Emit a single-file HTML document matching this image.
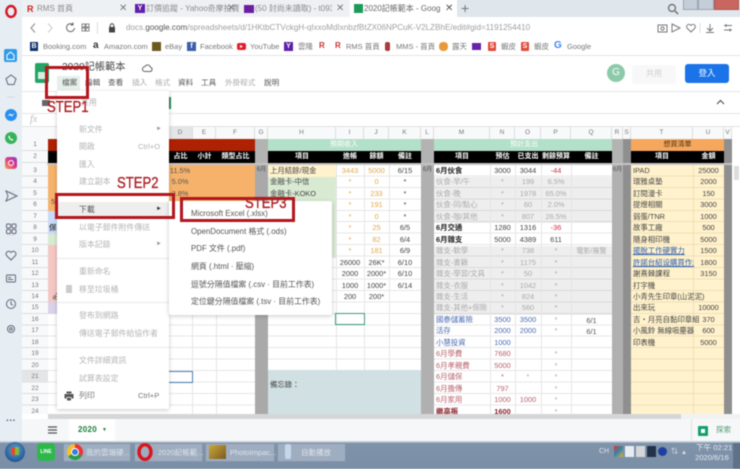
<!DOCTYPE html>
<html><head><meta charset="utf-8"><style>
html,body{margin:0;padding:0;background:#fff}
body{width:740px;height:463px;overflow:hidden;position:relative;font-family:"Liberation Sans","Noto Sans CJK TC",sans-serif}
#w{position:absolute;left:0;top:0;width:740px;height:463px;filter:blur(.45px)}
#w div,#w span.a,#w svg{position:absolute}
.t{white-space:nowrap}
.c{top:165px;font-size:7.4px;line-height:11.45px;text-align:center;color:#444;white-space:nowrap}
.h{font-size:7px;line-height:12px;top:151px;color:#fff;font-weight:bold;text-align:center;white-space:nowrap}
.ch{top:127px;height:12px;line-height:12px;font-size:6.5px;color:#777;text-align:center;border-right:1px solid #ddd;box-sizing:border-box;background:#f8f9fa}
.m{left:79px;font-size:7.9px;color:#b4b4b4;line-height:12px;white-space:nowrap}
.s{left:191px;font-size:7.9px;color:#555;line-height:12px;white-space:nowrap}
.sp{left:57px;width:112px;height:1px;background:#e8e8e8}
.mb{top:77px;font-size:7.6px;line-height:12px;color:#555;white-space:nowrap}
.bk{top:41px;font-size:7.5px;line-height:12px;color:#777;white-space:nowrap}
.ic{top:42px;width:9px;height:9px;color:#fff;font-size:7px;line-height:9px;text-align:center;font-weight:bold}
.tab{top:3px;font-size:8px;line-height:12px;color:#8a8a8a;white-space:nowrap}
.x{top:3px;font-size:10px;line-height:12px;color:#777}
.box{border:3.5px solid #b3161c;box-sizing:border-box}
.st{font-size:16px;line-height:16px;color:#ad1f24;-webkit-text-stroke:.35px #ad1f24;white-space:nowrap;transform:scaleX(.82);transform-origin:left top}
.o{color:#e0a84a}.b{color:#4a6ab0}.r{color:#b9606a}.g{color:#aaa}.k{color:#222;font-weight:bold}
.tb{top:443px;height:19px;background:#9fadc0;border:1px solid #8393a8;box-sizing:border-box;font-size:7.5px;line-height:17px;color:#dfe5ec;white-space:nowrap;padding-left:22px}
</style></head><body><div id="w">

<!-- edge bleed so the blur does not fade at the viewport edges -->
<div style="left:-6px;top:-6px;width:752px;height:475px;background:#fff"></div>
<div style="left:-6px;top:-6px;width:28px;height:450px;background:#e6edf3"></div>
<div style="left:732px;top:100px;width:14px;height:340px;background:#fff"></div>

<!-- tab strip -->
<div style="left:22px;top:-6px;width:724px;height:23px;background:#dfe6ec"></div>
<div style="left:22px;top:-6px;width:328px;height:23px;background:#eef1f4"></div>
<div style="left:350px;top:-6px;width:107px;height:23px;background:#fff"></div>
<svg style="left:4px;top:4px" width="15" height="15" viewBox="0 0 15 15"><ellipse cx="7" cy="7.500" rx="4.600" ry="5.500" fill="none" stroke="#d9151f" stroke-width="2.400"/></svg>
<div style="left:27px;top:4px;width:8px;height:10px;color:#c22;font-size:9px;line-height:10px;font-weight:bold">R</div>
<div class="tab" style="left:37px">RMS 首頁</div><div class="x" style="left:119px">✕</div>
<div style="left:135px;top:4px;width:10px;height:9px;background:#5f1fa8;color:#fff;font-size:7px;line-height:9px;text-align:center;font-weight:bold">Y</div>
<div class="tab" style="left:146px">訂價追蹤 - Yahoo奇摩拍賣</div><div class="x" style="left:227px">✕</div>
<div style="left:244px;top:5px;width:10px;height:8px;background:#6a1fa0"></div>
<div class="tab" style="left:255px">(50 封尚未讀取) - t09322~</div><div style="left:332px;top:0;width:18px;height:17px;background:#eef1f4"></div><div class="x" style="left:336px">✕</div>
<div style="left:354px;top:4px;width:9px;height:9px;background:#1b9a59"></div>
<div class="tab" style="left:364px;color:#666">2020記帳範本 - Google 試</div><div style="left:440px;top:0;width:17px;height:17px;background:#fff"></div><div class="x" style="left:445px;color:#555">✕</div>
<div style="left:461px;top:1px;font-size:14px;line-height:14px;color:#777">+</div>
<svg style="left:667px;top:3px" width="12" height="12" viewBox="0 0 12 12"><circle cx="5" cy="5" r="3.500" fill="none" stroke="#666" stroke-width="1.200"/><path d="M8 8l3 3" stroke="#666" stroke-width="1.300"/></svg>
<div style="left:683px;top:-3px;width:15px;height:13px;background:#c5ced8;border:1px solid #9aa5b2;box-sizing:border-box"></div>
<div style="left:698px;top:-3px;width:16px;height:13px;background:#c5ced8;border:1px solid #9aa5b2;box-sizing:border-box"></div>
<div style="left:714px;top:-3px;width:25px;height:13px;background:#c9665f;border:1px solid #a55;box-sizing:border-box"></div>

<!-- url bar -->
<div style="left:22px;top:17px;width:724px;height:23px;background:#fff"></div>
<svg style="left:28px;top:22px" width="70" height="12" viewBox="0 0 70 12" fill="none" stroke="#888" stroke-width="1"><path d="M7 1.500L3 6l4 4.500"/><path d="M20 1.500L24 6l-4 4.500" stroke="#ccc"/><path d="M45 2.500a4 4 0 1 0 1.500 3.500M45 0.500v2.500h-2.500" stroke="#666"/><rect x="54" y="2" width="3" height="3"/><rect x="58" y="2" width="3" height="3"/><rect x="54" y="6" width="3" height="3"/><rect x="58" y="6" width="3" height="3"/></svg>
<div style="left:97px;top:22px;width:1px;height:12px;background:#ddd"></div>
<svg style="left:108px;top:23px" width="8" height="10" viewBox="0 0 8 10"><rect x="1" y="4" width="6" height="5.500" fill="#444"/><path d="M2.200 4V2.600a1.800 1.800 0 0 1 3.600 0V4" fill="none" stroke="#444"/></svg>
<div class="t" style="left:126px;top:22px;font-size:8.1px;line-height:12px;color:#a0a0a0">docs.<span style="color:#555">google.com</span>/spreadsheets/d/1HKtbCTVckgH-qIxxoMdIxnbzfBtZX06NPCuK-V2LZBhE/edit#gid=1191254410</div>
<svg style="left:657px;top:22px" width="80" height="12" viewBox="0 0 80 12" fill="none" stroke="#777"><rect x="1" y="3" width="9" height="7"/><circle cx="5.500" cy="6.500" r="1.600"/><path d="M15 2l8 4-8 4z"/><path d="M34 10l-4-4a2.300 2.300 0 0 1 4-2.500a2.300 2.300 0 0 1 4 2.500z"/><path d="M43 1v10" stroke="#ddd"/><path d="M53 2v6M50 6l3 3 3-3M49 10.500h8"/><path d="M67 3.500h8M67 8h8M69 2v3M73 6.500v3"/></svg>

<!-- bookmarks -->
<div style="left:22px;top:55px;width:724px;height:1px;background:#e4e4e4"></div>
<div class="ic" style="left:30px;background:#12336b;width:8px">B</div><div class="bk" style="left:43px">Booking.com</div>
<div class="t" style="left:93px;top:40px;font-size:10px;line-height:12px;font-weight:bold;color:#333">a</div><div class="bk" style="left:104px">Amazon.com</div>
<div class="ic" style="left:152px;background:#6b5a1c"></div><div class="bk" style="left:165px">eBay</div>
<div class="ic" style="left:187px;background:#3b5fa8">f</div><div class="bk" style="left:200px">Facebook</div>
<div style="left:237px;top:43px;width:9px;height:7px;background:#e0202a;border-radius:2px"></div>
<svg style="left:240px;top:45px" width="3" height="3" viewBox="0 0 3 3"><path d="M0 0l3 1.500L0 3z" fill="#fff"/></svg>
<div class="bk" style="left:250px">YouTube</div>
<div class="ic" style="left:284px;background:#5f1fa8">Y</div><div class="bk" style="left:298px">雲隆</div>
<div class="t" style="left:319px;top:40px;font-size:8px;line-height:12px;font-weight:bold;color:#c33">R</div>
<div class="t" style="left:335px;top:40px;font-size:8px;line-height:12px;font-weight:bold;color:#c33">R</div>
<div class="bk" style="left:346px">RMS 首頁</div>
<div style="left:385px;top:42px;width:5px;height:9px;background:#a83a3a;border-radius:2px"></div><div class="bk" style="left:396px">MMS - 首頁</div>
<div style="left:439px;top:42px;width:9px;height:9px;background:#e69a3a;border-radius:4px"></div><div class="bk" style="left:452px">露天</div>
<div style="left:472px;top:43px;width:9px;height:7px;background:#6a22a8"></div>
<div class="ic" style="left:488px;width:8px;background:#e04a3a;border-radius:1px">S</div><div class="bk" style="left:501px">蝦皮</div>
<div class="ic" style="left:521px;width:8px;background:#e04a3a;border-radius:1px">S</div><div class="bk" style="left:534px">蝦皮</div>
<div class="t" style="left:554px;top:40px;font-size:10px;line-height:12px;font-weight:bold;color:#4285f4">G</div><div class="bk" style="left:567px">Google</div>

<!-- docs header -->
<div style="left:35px;top:63px;width:14px;height:20px;background:#23a566;border-radius:2px"></div>
<div style="left:38px;top:72px;width:8px;height:7px;background:#d7efe1"></div>
<div class="t" style="left:62px;top:60px;font-size:10.2px;line-height:16px;color:#444">2020記帳範本</div>
<svg style="left:142px;top:63px" width="11" height="10" viewBox="0 0 11 10"><path d="M3 8.500a2.400 2.400 0 0 1-.2-4.800a3 3 0 0 1 5.600.5a2.200 2.200 0 0 1-.2 4.300z" fill="none" stroke="#666"/></svg>
<div style="left:57px;top:76px;width:23px;height:14px;background:#e6f0ea"></div>
<div class="mb" style="left:62px">檔案</div><div class="mb" style="left:85px">編輯</div><div class="mb" style="left:108px">查看</div>
<div class="mb" style="left:132px;color:#aaa">插入</div><div class="mb" style="left:155px;color:#aaa">格式</div><div class="mb" style="left:178px">資料</div>
<div class="mb" style="left:201px">工具</div><div class="mb" style="left:225px;color:#aaa">外掛程式</div><div class="mb" style="left:264px">說明</div>
<div style="left:607px;top:64px;width:18px;height:18px;border-radius:50%;background:#8ccaa9;color:#fff;font-size:10px;line-height:18px;text-align:center">G</div>
<div style="left:632px;top:65px;width:44px;height:19px;border-radius:3px;background:#f8f8f8;color:#cfcfcf;font-size:8px;line-height:18px;text-align:center">共用</div>
<div style="left:685px;top:64px;width:44px;height:19px;border-radius:3px;background:#1a73e8;color:#fff;font-size:8.5px;line-height:19px;text-align:center">登入</div>
<div style="left:22px;top:91px;width:724px;height:1px;background:#e6e6e6"></div>
<svg style="left:716px;top:99px" width="9" height="6" viewBox="0 0 9 6"><path d="M1 5l3.500-3.500L8 5" fill="none" stroke="#555" stroke-width="1.200"/></svg>
<div style="left:22px;top:113px;width:724px;height:1px;background:#e6e6e6"></div>
<div style="left:169px;top:97px;width:2px;height:12px;background:#2a8a58"></div>
<div style="left:42px;top:100px;width:8px;height:6px;background:#666"></div>
<div class="t" style="left:30px;top:113px;font-size:10px;line-height:13px;font-family:'Liberation Serif',serif;font-style:italic;color:#bbb">fx</div>
<div style="left:22px;top:126px;width:724px;height:1px;background:#e2e2e2"></div>

<!-- column headers -->
<div style="left:22px;top:127px;width:710px;height:12px;background:#f8f9fa"></div>
<div class="ch" style="left:168px;width:25px;background:#e3e5e7">D</div>
<div class="ch" style="left:193px;width:23px">E</div>
<div class="ch" style="left:216px;width:39px">F</div>
<div class="ch" style="left:255px;width:13px">G</div>
<div class="ch" style="left:268px;width:68px">H</div>
<div class="ch" style="left:336px;width:28px">I</div>
<div class="ch" style="left:364px;width:25px">J</div>
<div class="ch" style="left:389px;width:32px">K</div>
<div class="ch" style="left:421px;width:13px">L</div>
<div class="ch" style="left:434px;width:56px">M</div>
<div class="ch" style="left:490px;width:25px">N</div>
<div class="ch" style="left:515px;width:26px">O</div>
<div class="ch" style="left:541px;width:30px">P</div>
<div class="ch" style="left:571px;width:41px">Q</div>
<div class="ch" style="left:612px;width:11px">R</div>
<div class="ch" style="left:623px;width:8px">S</div>
<div class="ch" style="left:631px;width:62px">T</div>
<div class="ch" style="left:693px;width:31px">U</div>
<div class="ch" style="left:724px;width:8px">V</div>

<!-- row header -->
<div style="left:22px;top:139px;width:26px;height:275px;background:#f8f9fa;border-right:1px solid #ccc;box-sizing:border-box"></div>
<div style="left:22px;top:139px;width:26px;height:24px;background:repeating-linear-gradient(#f8f9fa 0 11px,#ddd 11px 12px)"></div>
<div style="left:22px;top:165px;width:26px;height:249px;background:repeating-linear-gradient(#f8f9fa 0 10.45px,#ddd 10.45px 11.45px)"></div>
<div style="left:22px;top:371px;width:26px;height:11px;background:#e4e5e6"></div>
<div class="c" style="left:22px;width:26px;top:139px;font-size:6.5px;line-height:12px;color:#777">1<br>2</div>
<div class="c" style="left:22px;width:26px;font-size:6.5px;color:#777">3<br>4<br>5<br>6<br>7<br>8<br>9<br>10<br>11<br>12<br>13<br>14<br>15<br>16<br>17<br>18<br>19<br>20<br>21<br>22<br>23<br>24</div>

<!-- grid backgrounds -->
<div style="left:48px;top:165px;width:684px;height:249px;background:#fff"></div>
<div style="left:48px;top:165px;width:684px;height:249px;background:repeating-linear-gradient(transparent 0 10.45px,#e6e6e6 10.45px 11.45px)"></div>
<div style="left:48px;top:139px;width:207px;height:12px;background:#ae2103"></div>
<div style="left:48px;top:151px;width:207px;height:12px;background:#000"></div>
<div style="left:255px;top:139px;width:13px;height:24px;background:#b3b3b3"></div>
<div style="left:268px;top:139px;width:153px;height:12px;background:#b3e0c9"></div>
<div style="left:268px;top:151px;width:153px;height:12px;background:#000"></div>
<div style="left:421px;top:139px;width:13px;height:24px;background:#b3b3b3"></div>
<div style="left:434px;top:139px;width:178px;height:12px;background:#b3e0c9"></div>
<div style="left:434px;top:151px;width:178px;height:12px;background:#000"></div>
<div style="left:612px;top:139px;width:11px;height:24px;background:#b3b3b3"></div>
<div style="left:623px;top:139px;width:8px;height:24px;background:#8f8f8f"></div>
<div style="left:631px;top:139px;width:93px;height:12px;background:#f6a75e"></div>
<div style="left:631px;top:151px;width:93px;height:12px;background:#000"></div>
<div style="left:724px;top:139px;width:8px;height:24px;background:#8f8f8f"></div>
<div style="left:48px;top:163px;width:684px;height:2px;background:#c4c4c4"></div>

<div style="left:48px;top:165px;width:207px;height:46px;background:#f6b26b"></div>
<div style="left:48px;top:211px;width:20px;height:23px;background:#c9daf8"></div>
<div style="left:48px;top:234px;width:20px;height:11px;background:#d9ead3"></div>
<div style="left:48px;top:245px;width:20px;height:57px;background:#f4c7c3"></div>
<div style="left:48px;top:302px;width:20px;height:12px;background:#d9d2e9"></div>
<div style="left:255px;top:165px;width:13px;height:249px;background:#a9a9a9"></div>
<div style="left:268px;top:165px;width:68px;height:12px;background:#fff2cc"></div>
<div style="left:268px;top:177px;width:68px;height:81px;background:#d9ead3"></div>
<div style="left:268px;top:370px;width:153px;height:44px;background:#d0e0e3"></div>
<div style="left:421px;top:165px;width:13px;height:249px;background:#b0b0b0"></div>
<div style="left:434px;top:177px;width:178px;height:46px;background:rgba(120,120,120,.13)"></div>
<div style="left:434px;top:246px;width:178px;height:69px;background:rgba(120,120,120,.13)"></div>
<div style="left:612px;top:165px;width:11px;height:249px;background:#b0b0b0"></div>
<div style="left:623px;top:165px;width:8px;height:249px;background:#8f8f8f"></div>
<div style="left:631px;top:165px;width:93px;height:249px;background:#fff2cc"></div>
<div style="left:631px;top:165px;width:93px;height:249px;background:repeating-linear-gradient(transparent 0 10.45px,#eedfb6 10.45px 11.45px)"></div>
<div style="left:724px;top:165px;width:8px;height:249px;background:#8f8f8f"></div>
<!-- vertical lines -->
<div style="left:192px;top:315px;width:1px;height:99px;background:#e6e6e6"></div>
<div style="left:216px;top:315px;width:1px;height:99px;background:#e6e6e6"></div>
<div style="left:336px;top:165px;width:1px;height:205px;background:#e6e6e6"></div>
<div style="left:364px;top:165px;width:1px;height:205px;background:#e6e6e6"></div>
<div style="left:389px;top:165px;width:1px;height:205px;background:#e6e6e6"></div>
<div style="left:490px;top:165px;width:1px;height:249px;background:#e6e6e6"></div>
<div style="left:515px;top:165px;width:1px;height:249px;background:#e6e6e6"></div>
<div style="left:541px;top:165px;width:1px;height:249px;background:#e6e6e6"></div>
<div style="left:571px;top:165px;width:1px;height:249px;background:#e6e6e6"></div>
<div style="left:693px;top:165px;width:1px;height:249px;background:#eedfb6"></div>

<!-- headers text -->
<div class="t" style="left:330px;top:139px;width:28px;font-size:7px;line-height:12px;color:#fff;text-align:center">預期收入</div>
<div class="t" style="left:509px;top:139px;width:30px;font-size:7px;line-height:12px;color:#fff;text-align:center">預計支出</div>
<div class="t" style="left:631px;top:139px;width:93px;font-size:7px;line-height:12px;color:#4a3010;text-align:center">想買清單</div>
<div class="h" style="left:168px;width:25px">占比</div><div class="h" style="left:193px;width:23px">小計</div><div class="h" style="left:216px;width:39px">類型占比</div>
<div class="h" style="left:268px;width:68px">項目</div><div class="h" style="left:336px;width:28px">進帳</div><div class="h" style="left:364px;width:25px">餘額</div><div class="h" style="left:389px;width:32px">備註</div>
<div class="h" style="left:434px;width:56px">項目</div><div class="h" style="left:490px;width:25px">預估</div><div class="h" style="left:515px;width:26px">已支出</div><div class="h" style="left:541px;width:30px">剩餘預算</div><div class="h" style="left:571px;width:41px">備註</div>
<div class="h" style="left:631px;width:62px">項目</div><div class="h" style="left:693px;width:31px">金額</div>

<!-- cell text -->
<div class="c" style="left:169px;width:22px;color:#555">11.5%<br>5.0%<br>3.8%</div>
<div class="c" style="left:48px;width:20px;top:211px;text-align:left;padding-left:1px"><br><b>保</b></div>
<div class="c" style="left:52px;top:291px;font-style:italic">必</div>
<div class="c" style="left:51px;top:196px;color:#555">5</div>
<div class="c" style="left:255px;width:13px;font-size:6px;color:#555">6月</div>
<div class="c" style="left:270px;text-align:left;color:#444">上月結餘/現金<br>金融卡-中信<br>金融卡-KOKO</div>
<div class="c" style="left:270px;top:379px;text-align:left;color:#444">備忘錄：</div>
<div class="c" style="left:336px;width:28px"><span class="o">3443<br>*<br>*<br>*<br>*<br>*<br>*<br>*</span><br>26000<br>2000<br>1000<br>200</div>
<div class="c" style="left:364px;width:25px"><span class="o">5000<br>0<br>233<br>191<br>0<br>25<br>82<br>181</span><br>26K*<br>2000*<br>1000*<br>200*</div>
<div class="c" style="left:389px;width:32px">6/15<br>*<br>*<br>*<br>*<br>6/5<br>6/4<br>6/9<br>6/10<br>6/10<br>6/14</div>
<div class="c" style="left:421px;width:13px;font-size:6px;color:#555">6月</div>
<div class="c" style="left:436px;text-align:left"><span class="k">6月伙食</span><br><span class="g">伙食-早/午<br>伙食-晚<br>伙食-同/點心<br>伙食-咖/其他</span><br><span class="k">6月交通<br>6月雜支</span><br><span class="g">雜支-軟學<br>雜支-書籍<br>雜支-學習/文具<br>雜支-衣服<br>雜支-生活<br>雜支-其他+保險</span><br><span class="b">國泰儲蓄險<br>活存<br>小慧投資</span><br><span class="r">6月學費<br>6月孝親費<br>6月儲保<br>6月擔傳<br>6月家用</span><br><span style="color:#8a1f2a;font-weight:bold">繼高振</span></div>
<div class="c" style="left:490px;width:25px">3000<br><span class="g">*<br>*<br>*<br>*</span><br>1280<br>5000<br><span class="g">*<br>*<br>*<br>*<br>*<br>*</span><br><span class="b">3500<br>2000<br>1000</span><br><span class="r">7680<br>5000<br>*<br>797<br>1000</span><br><span style="color:#8a1f2a;font-weight:bold">1600</span></div>
<div class="c" style="left:515px;width:26px">3044<br><span class="g">199<br>1978<br>60<br>807</span><br>1316<br>4389<br><span class="g">738<br>1175<br>50<br>1042<br>824<br>560</span><br><span class="b">3500<br>2000</span><br><br><br><br><span class="g">*</span><br><br><span class="r">1000</span></div>
<div class="c" style="left:541px;width:30px"><span style="color:#d03040">-44</span><br><span class="g">6.5%<br>65.0%<br>2.0%<br>26.5%</span><br><span style="color:#d03040">-36</span><br>611<br><span class="g">*<br>*<br>*<br>*<br>*<br>*<br>*<br>*<br><br>*<br>*<br>*<br>*<br>*<br>*</span></div>
<div class="c" style="left:571px;width:41px;color:#555"><br><br><br><br><br><br><br><span class="g" style="font-size:7px">電影/展覽</span><br><br><br><br><br><br>6/1<br>6/1</div>
<div class="c" style="left:612px;width:11px;font-size:6px;color:#555">6月</div>
<div class="c" style="left:633px;text-align:left;color:#444">IPAD<br>環雅桌墊<br>訂閱漫卡<br>提燈相關<br>弱蛋/TNR<br>故事工廠<br>隨身相印機<br><u style="color:#2a5ab0">擺脫工作硬實力</u><br><u style="color:#2a5ab0">許諾台紹设購買作:</u><br>謝熹棘課程<br>打字機<br>小青先生印章(山泥泥)<br>出來玩<br>吉・月亮自黏印章組<br>小風鈴 無線吸塵器<br>印表機</div>
<div class="c" style="left:693px;width:31px;color:#444">25000<br>2000<br>150<br>3000<br>1000<br>500<br>5000<br>1500<br>1800<br>3150<br><br><br>10000<br>370<br>600<br>5000</div>

<!-- selections -->
<div style="left:335px;top:313px;width:30px;height:12px;border:1px solid #3f9a78;box-sizing:border-box"></div>
<div style="left:160px;top:371px;width:33px;height:12px;border:1px solid #4a7fb5;box-sizing:border-box"></div>

<!-- scrollbars -->
<div style="left:734px;top:166px;width:5px;height:14px;background:#dcdcdc"></div>
<div style="left:48px;top:414px;width:698px;height:5px;background:#f2f2f2"></div>
<div style="left:48px;top:414px;width:633px;height:5px;background:#d6d6d6"></div>

<!-- file menu -->
<div style="left:57px;top:91px;width:112px;height:318px;background:#fff;box-shadow:0 1px 4px rgba(0,0,0,.22)"></div>
<div style="left:57px;top:202px;width:112px;height:17px;background:#eee"></div>
<div class="m" style="left:81px;top:97px">共用</div>
<div class="m" style="top:124px">新文件</div><div class="t" style="left:156px;top:126px;font-size:6px;color:#999">►</div>
<div class="m" style="top:141px">開啟</div><div class="m" style="left:138px;top:141px;font-size:7.6px">Ctrl+O</div>
<div class="m" style="top:159px">匯入</div>
<div class="m" style="top:176px">建立副本</div>
<div class="sp" style="top:194px"></div>
<div class="m" style="top:204px;color:#555">下載</div><div class="t" style="left:156px;top:206px;font-size:6px;color:#333">►</div>
<div class="m" style="top:222px">以電子郵件附件傳送</div>
<div class="m" style="top:239px">版本記錄</div><div class="t" style="left:156px;top:241px;font-size:6px;color:#999">►</div>
<div class="sp" style="top:258px"></div>
<div class="m" style="top:266px">重新命名</div>
<div class="m" style="top:284px">移至垃圾桶</div>
<div style="left:66px;top:285px;width:6px;height:8px;background:#ccc"></div>
<div class="sp" style="top:302px"></div>
<div class="m" style="top:310px">發布到網路</div>
<div class="m" style="top:328px">傳送電子郵件給協作者</div>
<div class="sp" style="top:347px"></div>
<div class="m" style="top:355px">文件詳細資訊</div>
<div class="m" style="top:373px">試算表設定</div>
<div class="m" style="top:390px;color:#777">列印</div><div class="m" style="left:138px;top:390px;font-size:7.6px;color:#777">Ctrl+P</div>
<svg style="left:64px;top:391px" width="10" height="10" viewBox="0 0 10 10"><path d="M2.500 0.500h5v2h-5zM0.500 3h9v4.500h-2V6h-5v1.500h-2zM3 6.800h4v2.700H3z" fill="#555"/></svg>

<!-- download submenu -->
<div style="left:169px;top:201px;width:163px;height:114px;background:#fff;box-shadow:0 1px 4px rgba(0,0,0,.22);border-radius:0 2px 2px 2px"></div>
<div class="s" style="top:208px">Microsoft Excel (.xlsx)</div>
<div class="s" style="top:226px">OpenDocument 格式 (.ods)</div>
<div class="s" style="top:243px">PDF 文件 (.pdf)</div>
<div class="s" style="top:261px">網頁 (.html · 壓縮)</div>
<div class="s" style="top:279px">逗號分隔值檔案 (.csv · 目前工作表)</div>
<div class="s" style="top:296px">定位鍵分隔值檔案 (.tsv · 目前工作表)</div>

<!-- red annotations -->
<div class="box" style="left:45px;top:66px;width:44px;height:33px"></div>
<div class="st" style="left:47px;top:100px">STEP1</div>
<div class="box" style="left:55px;top:193px;width:120px;height:26px"></div>
<div class="st" style="left:117px;top:175.500px">STEP2</div>
<div class="box" style="left:180px;top:197px;width:115px;height:25px"></div>
<div class="st" style="left:245px;top:196px">STEP3</div>

<!-- sidebar icons -->
<div style="left:4px;top:49px;width:13px;height:13px;background:#2f9be8;border-radius:2px"></div>
<svg style="left:6px;top:51px" width="9" height="9" viewBox="0 0 9 9"><path d="M1 4l3.500-3L8 4v4.500H1z" fill="none" stroke="#fff"/></svg>
<svg style="left:0;top:70px" width="22" height="370" viewBox="0 0 22 370" fill="none" stroke="#667">
<path d="M11 5l5 3.700-2 5.800H8L6 8.700z"/>
<path d="M7 27h8M7 122h8M7 165h8" stroke="#d5dbe0"/>
<path d="M6 121l11 5-11 5 2-5z"/>
<rect x="6.500" y="154" width="4" height="4" rx="1"/><rect x="12" y="154" width="4" height="4" rx="1"/><rect x="6.500" y="159.500" width="4" height="4" rx="1"/><rect x="12" y="159.500" width="4" height="4" rx="1"/>
<path d="M11 190l-4.500-4.500a2.700 2.700 0 0 1 4.500-3a2.700 2.700 0 0 1 4.500 3z"/>
<rect x="6.500" y="205" width="9" height="7" rx="1"/><path d="M8 207.500h3M8 209.500h5"/>
<circle cx="11" cy="234" r="4.500"/><path d="M11 231v3.200l2 1"/>
<circle cx="11" cy="259" r="3.500"/><circle cx="11" cy="259" r="1.300"/>
</svg>
<div style="left:5px;top:109px;width:12px;height:12px;border-radius:50%;background:#2a8ff0"></div>
<svg style="left:7px;top:112px" width="8" height="6" viewBox="0 0 8 6"><path d="M0.500 4.500L3 1.500l2 1.500L7.500 1 5 4.500 3 3z" fill="#fff"/></svg>
<div style="left:5px;top:132px;width:12px;height:12px;border-radius:50%;background:#38b25a"></div>
<svg style="left:7px;top:134px" width="8" height="8" viewBox="0 0 8 8"><path d="M2 1.500c-1 1-.5 2.500.7 3.700s2.700 1.800 3.800.8L5.200 4.800l-.9.500-1.600-1.600.5-.9z" fill="#fff"/></svg>
<div style="left:5px;top:157px;width:12px;height:12px;border-radius:3px;background:linear-gradient(45deg,#f5a14a,#d8388c 55%,#8a3ac0)"></div>
<div style="left:8px;top:160px;width:6px;height:6px;border:1px solid #fff;border-radius:50%;box-sizing:border-box"></div>
<div class="t" style="left:6px;top:414px;font-size:10px;line-height:10px;font-weight:bold;color:#667;letter-spacing:.5px">...</div>

<!-- sheet tab bar -->
<div style="left:22px;top:419px;width:724px;height:22px;background:#f6f7f8"></div>
<svg style="left:48px;top:426px" width="9" height="8" viewBox="0 0 9 8"><path d="M0 1h9M0 4h9M0 7h9" stroke="#555" stroke-width="1.300"/></svg>
<div style="left:69px;top:419px;width:46px;height:22px;background:#fff"></div>
<div class="t" style="left:78px;top:424px;font-size:8px;line-height:12px;color:#188038;font-weight:bold;letter-spacing:.3px">2020</div>
<div class="t" style="left:102px;top:425px;font-size:5px;line-height:10px;color:#188038">▼</div>
<div style="left:691px;top:419px;width:1px;height:22px;background:#e0e0e0"></div>
<div style="left:698px;top:426px;width:10px;height:10px;background:#14a06a;border-radius:1px"></div>
<div style="left:701px;top:429px;width:4px;height:4px;background:#fff"></div>
<div class="t" style="left:716px;top:424px;font-size:7.5px;line-height:12px;color:#5a9a7a">探索</div>

<!-- taskbar -->
<div style="left:-6px;top:441px;width:752px;height:28px;background:linear-gradient(#c9d2dc 0,#c9d2dc 1px,#7f93ab 2px,#7a8ea6)"></div>
<div style="left:5px;top:442px;width:20px;height:20px;border-radius:50%;background:radial-gradient(circle at 50% 40%,#5ba4d8,#2a5f9a 65%,#1c3f6a)"></div>
<div style="left:11px;top:447px;width:8px;height:8px;background:linear-gradient(90deg,#d9502e 50%,#8cb83a 50%)"></div>
<div style="left:37px;top:443px;width:18px;height:18px;background:#2eb84a;border-radius:4px;color:#fff;font-size:5px;line-height:18px;text-align:center;font-weight:bold">LINE</div>
<div class="tb" style="left:63px;width:68px">我的雲端硬...</div>
<div style="left:67px;top:444px;width:16px;height:16px;border-radius:50%;background:conic-gradient(#e33 0 33%,#2a9d4a 33% 66%,#f5c02a 66%)"></div>
<div style="left:71px;top:448px;width:8px;height:8px;border-radius:50%;background:#3a7be0;border:1px solid #fff;box-sizing:border-box"></div>
<div class="tb" style="left:134px;width:69px;padding-left:23px">2020記帳範...</div>
<svg style="left:136px;top:443px" width="18" height="18" viewBox="0 0 18 18"><ellipse cx="9" cy="9" rx="6" ry="7.300" fill="none" stroke="#d9151f" stroke-width="3.400"/></svg>
<div class="tb" style="left:205px;width:70px;padding-left:24px">PhotoImpac...</div>
<div style="left:209px;top:445px;width:17px;height:14px;background:linear-gradient(135deg,#c9a83a,#7a5a20)"></div>
<div class="tb" style="left:277px;width:69px;padding-left:23px">自動播放</div>
<div style="left:285px;top:444px;width:6px;height:15px;background:#c5d6ea;border-radius:2px"></div>

<!-- tray -->
<div class="t" style="left:599px;top:447px;font-size:7px;line-height:10px;color:#dde3ea">CH</div>
<div style="left:614px;top:446px;width:9px;height:11px;background:linear-gradient(135deg,#d33,#38a 50%,#ea3)"></div>
<div style="left:625px;top:446px;width:9px;height:11px;background:#e8ecf0"></div>
<div style="left:636px;top:446px;width:9px;height:11px;background:#d4d6d8"></div>
<div style="left:647px;top:446px;width:9px;height:11px;background:#23324a"></div>
<div style="left:658px;top:447px;width:9px;height:9px;border-radius:50%;background:#2040a0"></div>
<div class="t" style="left:671px;top:447px;font-size:7px;line-height:10px;color:#dde3ea">⇅</div>
<div class="t" style="left:681px;top:448px;font-size:6px;line-height:10px;color:#dde3ea">▲</div>
<div class="t" style="left:696px;top:443px;font-size:7.6px;line-height:9px;color:#e6ebf0;text-align:center;width:32px">下午 02:21</div>
<div class="t" style="left:694px;top:453px;font-size:7.6px;line-height:9px;color:#e6ebf0;text-align:center;width:36px">2020/6/16</div>
<div style="left:733px;top:443px;width:13px;height:26px;background:#5f7289"></div>

</div></body></html>
